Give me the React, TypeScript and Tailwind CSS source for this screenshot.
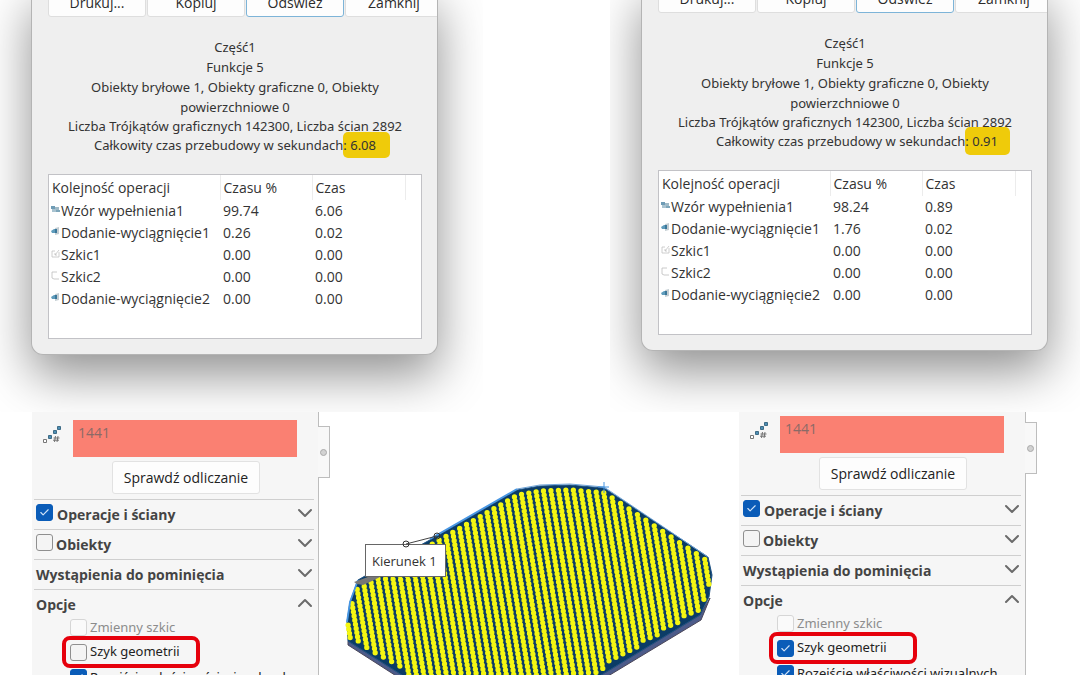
import { useId } from "react";
import { Check, ChevronDown, ChevronUp } from "lucide-react";

type Row = { icon: IconKind; name: string; percent: string; time: string };
type IconKind = "pattern" | "extrude" | "sketch" | "sketchOpen";

const leftRows: Row[] = [
  { icon: "pattern", name: "Wzór wypełnienia1", percent: "99.74", time: "6.06" },
  { icon: "extrude", name: "Dodanie-wyciągnięcie1", percent: "0.26", time: "0.02" },
  { icon: "sketch", name: "Szkic1", percent: "0.00", time: "0.00" },
  { icon: "sketchOpen", name: "Szkic2", percent: "0.00", time: "0.00" },
  { icon: "extrude", name: "Dodanie-wyciągnięcie2", percent: "0.00", time: "0.00" },
];

const rightRows: Row[] = [
  { icon: "pattern", name: "Wzór wypełnienia1", percent: "98.24", time: "0.89" },
  { icon: "extrude", name: "Dodanie-wyciągnięcie1", percent: "1.76", time: "0.02" },
  { icon: "sketch", name: "Szkic1", percent: "0.00", time: "0.00" },
  { icon: "sketchOpen", name: "Szkic2", percent: "0.00", time: "0.00" },
  { icon: "extrude", name: "Dodanie-wyciągnięcie2", percent: "0.00", time: "0.00" },
];

function FeatureIcon({ kind }: { kind: IconKind }) {
  return (
    <svg viewBox="0 0 9 9" className="mb-1 size-[9px] shrink-0" aria-hidden="true">
      {kind === "pattern" && (
        <>
          <path d="M0 1h4v3H0z" fill="#6f9cb5" />
          <path d="M4 2h4v3H4z" fill="#9fb9c6" />
          <path d="M1 4h4v3H1z" fill="#a9c3d0" />
          <path d="M5 5h4v2H5z" fill="#7ea6ba" />
        </>
      )}
      {kind === "extrude" && (
        <>
          <path d="M4 1l4-1v7L4 8z" fill="#c3cdd2" />
          <path d="M0 4l3-2h3v4H1z" fill="#5f9cbc" />
          <path d="M4 2h2v4H4z" fill="#3b7799" />
        </>
      )}
      {kind === "sketch" && (
        <path d="M1 2v6h7V3M1 2h3M4 6l4-5M4 4v2h2" fill="none" stroke="#c2c2c2" strokeWidth="0.8" />
      )}
      {kind === "sketchOpen" && (
        <path d="M6 1H1v6l2 1h5" fill="none" stroke="#bdbdbd" strokeWidth="0.8" />
      )}
    </svg>
  );
}

type DialogProps = {
  rows: Row[];
  total: string;
  dialogClass: string;
  totalClass: string;
  markClass: string;
};

function StatsDialog({ rows, total, dialogClass, totalClass, markClass }: DialogProps) {
  const button =
    "h-[30px] w-[98px] shrink-0 rounded-[3px] border bg-[#fdfdfd] text-center text-[#2b2b2b]";
  return (
    <div
      className={`w-[407px] overflow-hidden rounded-b-xl border border-t-0 border-[#b4b4b4] bg-[#efefef] pr-[15px] pb-[15px] pl-4 text-[14px] text-[#333] shadow-[0_20px_50px_rgba(0,0,0,0.44)] ${dialogClass}`}
    >
      <div className="flex gap-px">
        <button className={`${button} border-[#dedede]`}>Drukuj...</button>
        <button className={`${button} border-[#dedede]`}>Kopiuj</button>
        <button className={`${button} border-[#7db4d8]`}>Odśwież</button>
        <button className={`${button} border-[#dedede]`}>Zamknij</button>
      </div>
      <div className="mt-5 text-center font-['Noto_Sans',sans-serif] text-[13px] leading-5">
        <p>Część1</p>
        <p>Funkcje 5</p>
        <p>
          Obiekty bryłowe 1, Obiekty graficzne 0, Obiekty
          <br />
          powierzchniowe 0
        </p>
        <p className="leading-[19px]">Liczba Trójkątów graficznych 142300, Liczba ścian 2892</p>
        <p className={`leading-[19px] ${totalClass}`}>
          Całkowity czas przebudowy w sekundach
          <mark className={`rounded-[5px] bg-[#efcb0a] text-[#333] ${markClass}`}>
            : {total}
          </mark>
        </p>
      </div>
      <div className="mt-[19px] h-[165px] border border-[#c2c2c6] bg-white">
        <table className="w-full table-fixed border-collapse text-left">
          <colgroup>
            <col className="w-[171px]" />
            <col className="w-[92px]" />
            <col className="w-[93px]" />
            <col />
          </colgroup>
          <thead>
            <tr className="h-[25px]">
              <th className="border-r border-[#ececec] p-0 pl-[3px] font-normal">Kolejność operacji</th>
              <th className="border-r border-[#ececec] p-0 pl-[3px] font-normal">Czasu %</th>
              <th className="border-r border-[#ececec] p-0 pl-[3px] font-normal">Czas</th>
              <th className="p-0" />
            </tr>
          </thead>
          <tbody>
            {rows.map((row) => (
              <tr key={row.name} className="h-[22px] leading-5">
                <td className="p-0 pl-[2px]">
                  <span className="flex items-center gap-px whitespace-nowrap">
                    <FeatureIcon kind={row.icon} />
                    {row.name}
                  </span>
                </td>
                <td className="p-0 pl-[3px]">{row.percent}</td>
                <td className="p-0 pl-[3px]">{row.time}</td>
                <td className="p-0" />
              </tr>
            ))}
          </tbody>
        </table>
      </div>
    </div>
  );
}

type TickProps = {
  label: string;
  checked?: boolean;
  disabled?: boolean;
  className?: string;
  raised?: boolean;
};

function Tick({ label, checked = false, disabled = false, className = "", raised = false }: TickProps) {
  const id = useId();
  return (
    <div className={`flex items-center ${className}`}>
      <span className={`grid shrink-0 place-items-center ${raised ? "mb-1" : ""}`}>
        <input
          id={id}
          type="checkbox"
          defaultChecked={checked}
          disabled={disabled}
          className="peer col-start-1 row-start-1 size-[17px] appearance-none rounded-[3px] border border-[#8f8f8f] bg-[#f4f4f4] checked:border-[#0a5cb8] checked:bg-[#0a5cb8] disabled:border-[#d6d6d6] disabled:bg-[#fafafa]"
        />
        <Check
          className="pointer-events-none invisible col-start-1 row-start-1 size-[11px] text-[#cfe2f7] peer-checked:visible"
          strokeWidth={2.5}
        />
      </span>
      <label htmlFor={id} className="whitespace-nowrap">
        {label}
      </label>
    </div>
  );
}

function CountIcon() {
  return (
    <svg viewBox="0 0 20 20" className="mt-[5px] size-5 shrink-0" aria-hidden="true">
      <path d="M1.5 14.5h3v3h-3z" fill="#fff" stroke="#777" />
      <path d="M6.5 10.500h3v3h-3zM11.5 5.500h3v3h-3zM15.500 1.500h3v3h-3z" fill="#4d8fb5" stroke="#3f6c86" />
      <path d="M13.500 11l-1 6M16 11l-1 6M11.500 13h6M11 15.200h6" fill="none" stroke="#666" strokeWidth="0.9" />
    </svg>
  );
}

type PanelProps = {
  geometry: boolean;
  panelClass: string;
  tabClass: string;
  ringClass: string;
};

function PropertyPanel({ geometry, panelClass, tabClass, ringClass }: PanelProps) {
  const header =
    "flex h-[30px] items-center justify-between border-t border-[#cfcfcf] pl-[2px] font-bold";
  const chevron = "-mr-[3px] mb-1 size-6 text-[#6b6b6b]";
  return (
    <section
      className={`relative w-[287px] shrink-0 border-r border-[#bdbdbd] bg-[#f6f6f6] pr-1 pl-[2px] text-[14px] text-[#444] ${panelClass}`}
    >
      <div
        className={`absolute left-full flex h-[52px] w-3 items-center border border-l-0 border-[#bdbdbd] bg-[#f8f8f8] pl-[2px] ${tabClass}`}
      >
        <span className="size-[7px] rounded-full border border-[#aaa] bg-[#d2d2d2]" />
      </div>
      <div className="flex gap-[11px] pl-2">
        <CountIcon />
        <input
          aria-label="Liczba wystąpień"
          defaultValue="1441"
          className="h-[37px] w-[224px] bg-[#fa8072] px-[5px] pb-[13px] text-[#8b6a67] outline-none"
        />
      </div>
      <div className="mt-1 flex pl-[78px]">
        <button className="h-[33px] w-[148px] rounded-[3px] border border-[#e2e2e2] bg-[#fdfdfd] text-[#222]">
          Sprawdź odliczanie
        </button>
      </div>
      <div className="mt-[5px]">
        <div className={header}>
          <Tick label="Operacje i ściany" checked raised className="gap-1" />
          <ChevronDown className={chevron} />
        </div>
        <div className={header}>
          <Tick label="Obiekty" raised className="gap-[3px]" />
          <ChevronDown className={chevron} />
        </div>
        <div className={header}>
          <span>Wystąpienia do pominięcia</span>
          <ChevronDown className={chevron} />
        </div>
        <div className={header}>
          <span>Opcje</span>
          <ChevronUp className={chevron} />
        </div>
      </div>
      <div className="pl-9 font-['Noto_Sans',sans-serif] text-[13px]">
        <Tick label="Zmienny szkic" disabled className="h-[17px] gap-[3px] text-[#8c8c8c]" />
        <div className="-ml-2 flex">
          <div className={`flex items-center rounded-lg border-4 border-[#e6000c] pl-1 ${ringClass}`}>
            <Tick label="Szyk geometrii" checked={geometry} className="gap-[3px] text-[#222]" />
          </div>
        </div>
        <Tick
          label="Rozejście właściwości wizualnych"
          checked
          className="mt-px h-[17px] gap-[3px] text-[#222]"
        />
      </div>
    </section>
  );
}

type Point = [number, number];

const plate: Point[] = [
  [347, 622], [350, 602], [358, 580], [372, 572], [437, 536], [517, 490], [540, 486],
  [570, 485], [604, 488], [708, 557], [712, 575], [709, 597], [700, 615], [570, 694],
  [440, 699], [348, 641],
];

// Columns of round bosses lean slightly; each is trimmed to the plate outline.
function bossColumns() {
  const lean = 0.165;
  const pitch = 7.5;
  const columns: { x1: number; y1: number; x2: number; y2: number }[] = [];
  for (let base = 250; base < 720; base += pitch) {
    const hits: number[] = [];
    plate.forEach(([ax, ay], i) => {
      const [bx, by] = plate[(i + 1) % plate.length];
      const fa = ax - lean * (ay - 485) - base;
      const fb = bx - lean * (by - 485) - base;
      if (fa * fb < 0) hits.push(ay + ((by - ay) * fa) / (fa - fb));
    });
    if (hits.length < 2) continue;
    const y1 = Math.min(...hits) + 5;
    const y2 = Math.max(...hits) - 5;
    if (y2 <= y1) continue;
    columns.push({ x1: base + lean * (y1 - 485), y1, x2: base + lean * (y2 - 485), y2 });
  }
  return columns;
}

function Model() {
  return (
    <svg viewBox="330 412 408 263" className="h-[263px] w-[408px]" role="img" aria-label="Kierunek 1">
      <path d="M348 641l92 58v5l-92-59zM700 615l-130 79v5l131-79 9-22z" fill="#4c5b8a" stroke="#4a4658" />
      <polygon points={plate.map((p) => p.join(",")).join(" ")} fill="#0b3c66" stroke="#1c5184" />
      {bossColumns().map((c) => (
        <line
          key={c.x1}
          {...c}
          stroke="#f4f612"
          strokeWidth="5.3"
          strokeLinecap="round"
          strokeDasharray="0 4.2"
        />
      ))}
      <path d="M347 622l3-20 8-22M430 539l87-50" fill="none" stroke="#4796e3" strokeWidth="1.8" />
      <path d="M517 489l23-4 30-1 34 3 104 70" fill="none" stroke="#6fa3d6" strokeWidth="1" />
      <path d="M604 482v11M598 487h11" stroke="#4796e3" strokeWidth="1" />
      <path d="M354 582l14-5h12l-8 4-9 4-6-1z" fill="#777" />
      <rect x="365.500" y="544.500" width="80" height="32" fill="#fff" stroke="#666" />
      <path d="M406 544l31-8" stroke="#444" />
      <circle cx="406" cy="544" r="3" fill="none" stroke="#333" />
      <circle cx="437" cy="536" r="3" fill="none" stroke="#333" />
      <text x="372" y="566" fontSize="13" fill="#333">
        Kierunek 1
      </text>
    </svg>
  );
}

export default function App() {
  return (
    <main className="flex h-screen flex-col overflow-hidden bg-white font-['Open_Sans','Noto_Sans',sans-serif]">
      <div className="flex shrink-0 justify-between">
        <section className="overflow-hidden pr-[45px] pb-[57px] pl-[31px]">
          <StatsDialog
            rows={leftRows}
            total="6.08"
            dialogClass="-mt-[13px]"
            totalClass=""
            markClass="-mr-[14px] py-1 pr-[14px]"
          />
        </section>
        <section className="overflow-hidden pr-8 pl-[31px]">
          <StatsDialog
            rows={rightRows}
            total="0.91"
            dialogClass="-mt-[17px]"
            totalClass="pl-6"
            markClass="-mr-3 py-[5px] pr-3"
          />
        </section>
      </div>
      <div className="flex min-h-0 flex-1">
        <PropertyPanel geometry={false} panelClass="ml-8 pt-2" tabClass="top-[14px]" ringClass="h-8 w-[138px]" />
        <div className="flex flex-1 justify-end pr-px">
          <Model />
        </div>
        <PropertyPanel geometry panelClass="mr-[54px] pt-1" tabClass="top-[10px]" ringClass="h-8 w-[148px]" />
      </div>
    </main>
  );
}
